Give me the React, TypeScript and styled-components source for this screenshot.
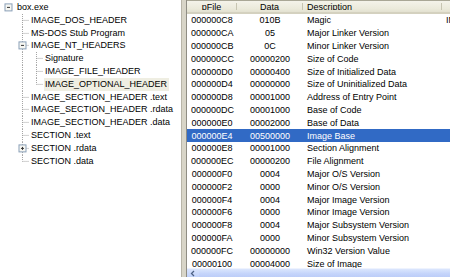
import React from "react";
import styled, { createGlobalStyle } from "styled-components";

const Global = createGlobalStyle`
  html, body { margin: 0; padding: 0; background: #fff; }
  body { font-family: "Liberation Sans", Arial, sans-serif; font-size: 9px; color: #000; }
`;

const ROW = 12.8;
const COLS = "50px 66px 139px 1fr";

const Frame = styled.div`
  display: flex;
  width: 450px;
  height: 277px;
  overflow: hidden;
`;

const TreePane = styled.div`
  width: 182px;
  flex: none;
  background: #fff;
  padding-top: 1px;
  border-right: 1px solid #b8b5a8;
  box-sizing: border-box;
`;

const Splitter = styled.div`
  width: 5px;
  flex: none;
  background: #d8d5c8;
  border-right: 1px solid #8f8d84;
  box-sizing: border-box;
`;

const ListPane = styled.div`
  flex: 1;
  min-width: 0;
  display: flex;
  flex-direction: column;
  background: #fff;
`;

const TreeRow = styled.div`
  display: flex;
  align-items: center;
  height: ${ROW}px;
  white-space: nowrap;
`;

const Guides = styled.svg`
  flex: none;
  display: block;
`;

const Label = styled.span<{ $sel?: boolean }>`
  display: inline-block;
  line-height: ${ROW}px;
  padding: 0 2px 0 1px;
  background: ${(p) => (p.$sel ? "#efeee2" : "transparent")};
`;

const Header = styled.div`
  display: grid;
  grid-template-columns: ${COLS};
  height: 14px;
  background: linear-gradient(#f4f3ea, #ebeadb 70%, #e3e1d0);
  border-top: 1px solid #a9a796;
  border-bottom: 2px solid #d4d1bf;
  box-sizing: border-box;
  flex: none;
`;

const HeadCell = styled.div<{ $align: string }>`
  display: flex;
  align-items: center;
  justify-content: ${(p) => p.$align};
  padding: 0 4px;
  border-right: 1px solid #c7c5b2;
  margin: 2px 0;
  overflow: hidden;
  white-space: nowrap;
`;

const Rows = styled.div`
  flex: 1;
  overflow: hidden;
`;

const Row = styled.div<{ $sel?: boolean }>`
  display: grid;
  grid-template-columns: ${COLS};
  height: ${ROW}px;
  align-items: center;
  background: ${(p) => (p.$sel ? "#316ac5" : "transparent")};
  color: ${(p) => (p.$sel ? "#fff" : "#000")};
`;

const Cell = styled.div<{ $align: string }>`
  text-align: ${(p) => p.$align};
  padding: 0 4px;
  overflow: hidden;
  white-space: nowrap;
`;

const HScroll = styled.div`
  height: 8px;
  flex: none;
  display: flex;
  background: linear-gradient(#dbe6fd, #c4d4fb 60%, #bccdf8);
  border-top: 1px solid #eef3fe;
`;

const ArrowBtn = styled.div`
  width: 12px;
  display: flex;
  align-items: center;
  justify-content: center;
  background: linear-gradient(#d9e4fd, #c1d2fa);
`;

type Node = { label: string; level: number; exp?: "+" | "-"; lines: boolean[]; last?: boolean; sel?: boolean };

const nodes: Node[] = [
  { label: "box.exe", level: 0, exp: "-", lines: [] },
  { label: "IMAGE_DOS_HEADER", level: 1, lines: [true] },
  { label: "MS-DOS Stub Program", level: 1, lines: [true] },
  { label: "IMAGE_NT_HEADERS", level: 1, exp: "-", lines: [true] },
  { label: "Signature", level: 2, lines: [true, true] },
  { label: "IMAGE_FILE_HEADER", level: 2, lines: [true, true] },
  { label: "IMAGE_OPTIONAL_HEADER", level: 2, lines: [true, false], last: true, sel: true },
  { label: "IMAGE_SECTION_HEADER .text", level: 1, lines: [true] },
  { label: "IMAGE_SECTION_HEADER .rdata", level: 1, lines: [true] },
  { label: "IMAGE_SECTION_HEADER .data", level: 1, lines: [true] },
  { label: "SECTION .text", level: 1, lines: [true] },
  { label: "SECTION .rdata", level: 1, exp: "+", lines: [true] },
  { label: "SECTION .data", level: 1, lines: [false], last: true },
];

const LINE = "#a3a3a3";

function Expander({ cx, cy, sign }: { cx: number; cy: number; sign: "+" | "-" }) {
  return (
    <g>
      <rect x={cx - 3.5} y={cy - 3.5} width={7} height={7} fill="#f7f7f2" stroke="#8aa0b8" strokeWidth={1} />
      <line x1={cx - 1.5} y1={cy} x2={cx + 1.5} y2={cy} stroke="#333" strokeWidth={1} />
      {sign === "+" && <line x1={cx} y1={cy - 1.5} x2={cx} y2={cy + 1.5} stroke="#333" strokeWidth={1} />}
    </g>
  );
}

function TreeGuides({ n }: { n: Node }) {
  const xs = [8.5, 22.5, 36.5];
  const width = n.level === 0 ? 16 : n.level === 1 ? 30 : 44;
  const mid = ROW / 2;
  const own = xs[n.level];
  return (
    <Guides width={width} height={ROW} viewBox={`0 0 ${width} ${ROW}`}>
      {n.level >= 1 &&
        n.lines.slice(0, n.level - 1).map((on, i) =>
          on ? <line key={i} x1={xs[i + 1]} y1={0} x2={xs[i + 1]} y2={ROW} stroke={LINE} strokeDasharray="1 1" /> : null
        )}
      {n.level >= 1 && (
        <>
          <line x1={own} y1={0} x2={own} y2={n.last ? mid : ROW} stroke={LINE} strokeDasharray="1 1" />
          <line x1={own} y1={mid} x2={width - 1} y2={mid} stroke={LINE} strokeDasharray="1 1" />
        </>
      )}
      {n.exp && <Expander cx={own} cy={mid} sign={n.exp} />}
    </Guides>
  );
}

const rows: [string, string, string, string?][] = [
  ["000000C8", "010B", "Magic", "IMAGE_NT_OPTIONAL_HDR32_MAGIC"],
  ["000000CA", "05", "Major Linker Version"],
  ["000000CB", "0C", "Minor Linker Version"],
  ["000000CC", "00000200", "Size of Code"],
  ["000000D0", "00000400", "Size of Initialized Data"],
  ["000000D4", "00000000", "Size of Uninitialized Data"],
  ["000000D8", "00001000", "Address of Entry Point"],
  ["000000DC", "00001000", "Base of Code"],
  ["000000E0", "00002000", "Base of Data"],
  ["000000E4", "00500000", "Image Base"],
  ["000000E8", "00001000", "Section Alignment"],
  ["000000EC", "00000200", "File Alignment"],
  ["000000F0", "0004", "Major O/S Version"],
  ["000000F2", "0000", "Minor O/S Version"],
  ["000000F4", "0004", "Major Image Version"],
  ["000000F6", "0000", "Minor Image Version"],
  ["000000F8", "0004", "Major Subsystem Version"],
  ["000000FA", "0000", "Minor Subsystem Version"],
  ["000000FC", "00000000", "Win32 Version Value"],
  ["00000100", "00004000", "Size of Image"],
];

export default function App() {
  return (
    <>
      <Global />
      <Frame>
        <TreePane>
          {nodes.map((n) => (
            <TreeRow key={n.label}>
              <TreeGuides n={n} />
              <Label $sel={n.sel}>{n.label}</Label>
            </TreeRow>
          ))}
        </TreePane>
        <Splitter />
        <ListPane>
          <Header>
            <HeadCell $align="center">pFile</HeadCell>
            <HeadCell $align="center">Data</HeadCell>
            <HeadCell $align="flex-start">Description</HeadCell>
            <HeadCell $align="flex-start" />
          </Header>
          <Rows>
            {rows.map((r, i) => (
              <Row key={r[0]} $sel={i === 9}>
                <Cell $align="center">{r[0]}</Cell>
                <Cell $align="center">{r[1]}</Cell>
                <Cell $align="left">{r[2]}</Cell>
                <Cell $align="left">{r[3] ?? ""}</Cell>
              </Row>
            ))}
          </Rows>
          <HScroll>
            <ArrowBtn>
              <svg width="6" height="7" viewBox="0 0 6 7">
                <path d="M4 1 L1.5 3.5 L4 6" fill="none" stroke="#4d6185" strokeWidth="1.3" />
              </svg>
            </ArrowBtn>
          </HScroll>
        </ListPane>
      </Frame>
    </>
  );
}
